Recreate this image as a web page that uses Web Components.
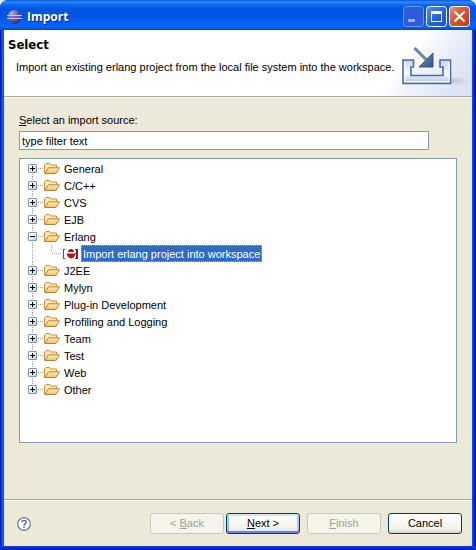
<!DOCTYPE html>
<html lang="en">
<head>
<meta charset="utf-8">
<title>Import</title>
<style>
  html, body { margin: 0; height: 100%; }
  body {
    background: #ece9d8;
    color: #000;
    font: 11px/17px "Liberation Sans", sans-serif;
  }
</style>
</head>
<body>
<dialog-window heading="Import">
  <wizard-banner heading="Select">Import an existing erlang project from the local file system into the workspace.</wizard-banner>
  <wizard-page>
    <filter-field value="type filter text"><u>S</u>elect an import source:</filter-field>
    <tree-view>
      <tree-item place="first">General</tree-item>
      <tree-item>C/C++</tree-item>
      <tree-item>CVS</tree-item>
      <tree-item>EJB</tree-item>
      <tree-item open>Erlang</tree-item>
      <tree-leaf>Import erlang project into workspace</tree-leaf>
      <tree-item>J2EE</tree-item>
      <tree-item>Mylyn</tree-item>
      <tree-item>Plug-in Development</tree-item>
      <tree-item>Profiling and Logging</tree-item>
      <tree-item>Team</tree-item>
      <tree-item>Test</tree-item>
      <tree-item>Web</tree-item>
      <tree-item place="last">Other</tree-item>
    </tree-view>
  </wizard-page>
  <wizard-footer>
    <push-button slot="pair" disabled>&lt; <u>B</u>ack</push-button>
    <push-button slot="pair" primary><u>N</u>ext &gt;</push-button>
    <push-button disabled><u>F</u>inish</push-button>
    <push-button>Cancel</push-button>
  </wizard-footer>
</dialog-window>

<script>
  const define = (name, html, setup) => customElements.define(name, class extends HTMLElement {
    connectedCallback() {
      if (this.shadowRoot) return;
      const template = document.createElement('template');
      template.innerHTML = html;
      this.attachShadow({ mode: 'open' }).append(template.content.cloneNode(true));
      if (setup) setup(this, this.shadowRoot);
    }
  });

  define('dialog-window', `
    <style>
      :host {
        display: flex; flex-direction: column; box-sizing: border-box; min-height: 100vh;
        border-radius: 8px 8px 0 0; overflow: hidden;
        padding: 0 4px 4px;
        background:
          linear-gradient(to bottom, #0c3ce0 0 1px, #0030d0 2px, #001a96 4px) bottom / 100% 4px no-repeat,
          linear-gradient(to right, #0019cf 0 1px, #0831d9 1px 2px, #166aee 2px 3px, #0855dd 3px) left / 4px 100% no-repeat,
          linear-gradient(to left, #00138c 0 1px, #001ea0 1px 2px, #0441d8 2px 3px, #0048f1 3px) right / 4px 100% no-repeat,
          #0054e3;
      }
      header {
        display: flex; align-items: center; gap: 2px; height: 30px; margin: 0 -4px; padding: 3px 6px 0 7px;
        box-sizing: border-box;
        background: linear-gradient(#0a50d8 0, #2b8cff 2px, #0a66ee 5px, #0055e0 9px, #0054e4 17px, #0561fa 23px, #0364fb 27px, #0046d8 30px);
      }
      h1 {
        flex: 1; margin: 0 0 0 2px; color: #fff; font: bold 12px/18px "Open Sans", sans-serif;
        text-shadow: 1px 1px #0a1e78;
      }
      button { padding: 0; border: 0; background: none; width: 21px; height: 21px; }
      svg { display: block; }
      .content { flex: 1; display: flex; flex-direction: column; background: #ece9d8; }
    </style>
    <header>
      <svg width="16" height="16" viewBox="0 0 16 16">
        <defs><radialGradient id="orb" cx=".3" cy=".25" r=".85"><stop offset="0" stop-color="#b4aad6"/><stop offset=".5" stop-color="#6a5ca4"/><stop offset="1" stop-color="#2c2268"/></radialGradient></defs>
        <circle cx="7.5" cy="8" r="7" fill="url(#orb)"/>
        <path d="M0 6.5h15M0 9.5h15" stroke="#c3c6ea"/><path d="M1 8h13" stroke="#6c66ad"/>
      </svg>
      <h1></h1>
      <button aria-label="Minimize" disabled><svg width="21" height="21">
        <rect x=".5" y=".5" width="20" height="20" rx="3" fill="#2a5cdc" stroke="#6f97ee"/>
        <path d="M5 13h7v3H5z" fill="#8fb0f2"/></svg></button>
      <button aria-label="Maximize"><svg width="21" height="21">
        <defs><linearGradient id="blue" x2="1" y2="1"><stop stop-color="#5c8df5"/><stop offset=".5" stop-color="#2a62e4"/><stop offset="1" stop-color="#1a4fd0"/></linearGradient></defs>
        <rect x=".5" y=".5" width="20" height="20" rx="3" fill="url(#blue)" stroke="#fff"/>
        <path d="M5 5h11v11H5zM6 8v7h9V8z" fill="#fff" fill-rule="evenodd"/></svg></button>
      <button aria-label="Close"><svg width="21" height="21">
        <defs><linearGradient id="red" x2="1" y2="1"><stop stop-color="#f09a80"/><stop offset=".4" stop-color="#e25530"/><stop offset="1" stop-color="#c63a10"/></linearGradient></defs>
        <rect x=".5" y=".5" width="20" height="20" rx="3" fill="url(#red)" stroke="#fff"/>
        <path d="M5.500 5.500l10 10M15.500 5.500l-10 10" stroke="#fff" stroke-width="2.200"/></svg></button>
    </header>
    <div class="content"><slot></slot></div>`,
    (host, root) => { root.querySelector('h1').textContent = host.getAttribute('heading'); });

  define('wizard-banner', `
    <style>
      :host {
        display: grid; height: 66px; background: #fff;
        border-bottom: 1px solid #aca899; box-shadow: 0 1px #fff; overflow: hidden;
      }
      .text, svg { grid-area: 1 / 1; }
      .text { padding: 6px 0 0 4px; white-space: nowrap; z-index: 1; }
      h2 { margin: 0; font: bold 13px/18px "DejaVu Sans Condensed", sans-serif; }
      p { margin: 5px 0 0 8px; }
      svg { justify-self: end; }
    </style>
    <svg width="102" height="66" viewBox="370 30 102 66">
      <defs>
        <linearGradient id="sky" x1="0" y1="0" x2="1" y2=".5"><stop offset=".45" stop-color="#fff"/><stop offset="1" stop-color="#d8e0f6"/></linearGradient>
        <linearGradient id="arc" x1="0" y1="0" x2="1" y2=".6"><stop stop-color="#fff"/><stop offset="1" stop-color="#dde4f8"/></linearGradient>
        <linearGradient id="tray" x2="0" y2="1"><stop stop-color="#c6d6ea"/><stop offset=".6" stop-color="#f4f8fd"/><stop offset="1" stop-color="#a9c0e0"/></linearGradient>
        <linearGradient id="arrow" x2="1" y2="1"><stop stop-color="#7d9cc4"/><stop offset="1" stop-color="#2d4f8c"/></linearGradient>
        <radialGradient id="glow"><stop stop-color="#fff8cf"/><stop offset="1" stop-color="#fff8cf" stop-opacity="0"/></radialGradient>
        <radialGradient id="shade"><stop stop-color="#b9b4c4" stop-opacity=".8"/><stop offset="1" stop-color="#c9c4d4" stop-opacity="0"/></radialGradient>
      </defs>
      <path d="M370 30h102v66H370z" fill="url(#sky)"/>
      <path d="M414 96C416 62 440 36 472 30V96z" fill="url(#arc)" opacity=".6"/>
      <ellipse cx="452" cy="81" rx="18" ry="5" fill="url(#shade)"/>
      <circle cx="426" cy="60" r="11" fill="url(#glow)"/>
      <path d="M403 60h10.500v7h-2.500v8.500h32V67h-3v-7h10.500v23.500H403z" fill="url(#tray)" stroke="#4c6ca0" stroke-width="1.600"/>
      <path d="M404.800 62v19.700h44.400V62" fill="none" stroke="#fff" stroke-width="1.200" opacity=".9"/>
      <path d="M414.500 48l13 13" stroke="#6484b4" stroke-width="3"/>
      <path d="M433 53v14h-14z" fill="url(#arrow)" stroke="#35578f"/>
    </svg>
    <div class="text"><h2></h2><p><slot></slot></p></div>`,
    (host, root) => { root.querySelector('h2').textContent = host.getAttribute('heading'); });

  define('wizard-page', `
    <style>
      :host { flex: 1; display: flex; flex-direction: column; gap: 8px; padding: 15px 15px 56px; border-bottom: 1px solid #aca899; box-shadow: 0 1px #fff; }
    </style><slot></slot>`);

  define('filter-field', `
    <style>
      :host { display: block; padding-right: 28px; }
      label { display: block; margin-bottom: 2px; }
      input {
        display: block; box-sizing: border-box; width: 100%; height: 19px; padding: 0 2px; margin: 0;
        border: 1px solid #7f9db9; background: #fff; color: inherit; font: inherit; outline: 0;
      }
    </style>
    <label for="filter"><slot></slot></label><input id="filter" type="text">`,
    (host, root) => { root.querySelector('input').value = host.getAttribute('value'); });

  define('tree-view', `
    <style>
      :host { flex: 1; display: block; border: 1px solid #7f9db9; background: #fff; padding: 1px 8px; }
    </style><slot></slot>`, host => host.setAttribute('role', 'tree'));

  define('tree-item', `
    <style>
      :host { display: flex; align-items: center; height: 17px; line-height: 19px; }
      button { display: block; padding: 0; border: 0; background: none; }
      svg { display: block; flex: none; }
      span { height: 17px; margin-left: 4px; white-space: nowrap; }
      :host([place="first"]) .up, :host([place="last"]) .down, :host([open]) .plus { display: none; }
    </style>
    <button aria-label="Toggle"><svg width="16" height="17" viewBox="0 0 16 17">
      <defs><linearGradient id="box" x2="1" y2="1"><stop offset=".3" stop-color="#fff"/><stop offset="1" stop-color="#c8c2b4"/></linearGradient></defs>
      <g stroke="#aca899" stroke-dasharray="1 1"><path class="up" d="M4.500 0v4"/><path class="down" d="M4.500 14v3"/><path d="M10 8.500h6"/></g>
      <rect x=".5" y="4.500" width="8" height="8" rx=".5" fill="url(#box)" stroke="#7898b5"/>
      <path d="M2 8.500h5" stroke="#000"/><path class="plus" d="M4.500 6v5" stroke="#000"/>
    </svg></button>
    <svg width="16" height="17" viewBox="0 0 16 17">
      <defs><linearGradient id="fold" x2="0" y2="1"><stop stop-color="#fff2c0"/><stop offset="1" stop-color="#f3bf5e"/></linearGradient></defs>
      <path d="M.5 13V5L2 3.500h3.500L7 5h5.500v3" fill="#fbe7b0" stroke="#c99040"/>
      <path d="M.8 13.500L4.500 7.800h11L11.800 13.500z" fill="url(#fold)" stroke="#b98034"/>
    </svg>
    <span><slot></slot></span>`, host => host.setAttribute('role', 'treeitem'));

  define('tree-leaf', `
    <style>
      :host { display: flex; align-items: center; height: 17px; }
      svg { display: block; flex: none; }
      span { box-sizing: border-box; height: 17px; line-height: 17px; margin-left: 3px; padding: 0 1px; white-space: nowrap; background: #316ac5; color: #fff; border: 1px dotted #f0b040; }
    </style>
    <svg width="50" height="17" viewBox="0 0 50 17">
      <g stroke="#aca899" stroke-dasharray="1 1"><path d="M4.500 0v17M23.500 0v8M24 8.500h10"/></g>
      <path d="M35 4h2v1h-1v8h1v1h-2z" fill="#c2262c"/>
      <path d="M47 4h3v10h-3v-1h1V9h-1V8h1V5h-1z" fill="#b01018"/>
      <path d="M40 7C40 3 46 3 46 7zM39 8.500h8V10C46 14.500 41 14.500 39 10z" fill="#b01018"/>
    </svg>
    <span><slot></slot></span>`, host => { host.setAttribute('role', 'treeitem'); host.setAttribute('aria-selected', 'true'); });

  define('wizard-footer', `
    <style>
      :host { display: flex; align-items: center; justify-content: flex-end; gap: 7px; padding: 13px 10px 12px 13px; }
      .help { margin-right: auto; padding: 0; border: 0; background: none; }
      svg { display: block; }
      .pair { display: flex; gap: 2px; }
    </style>
    <button class="help" aria-label="Help"><svg width="14" height="14" viewBox="0 0 14 14">
      <circle cx="7" cy="7" r="6.300" fill="#fff" stroke="#6a7d9c" stroke-width="1.300"/>
      <path d="M4.800 5.300C4.800 2.800 9.300 2.900 9.200 5.300 9.100 6.800 7 6.900 7 8.800M7 9.800v1.500" fill="none" stroke="#5a6e94" stroke-width="1.600"/>
    </svg></button>
    <div class="pair"><slot name="pair"></slot></div><slot></slot>`);

  define('push-button', `
    <style>
      :host { display: block; }
      button {
        display: block; box-sizing: border-box; width: 74px; height: 21px; padding: 0;
        border: 1px solid #003c74; border-radius: 3px; color: #000; font: inherit; line-height: 19px;
        background: linear-gradient(#fff, #f4f3ee 70%, #ecebe5 85%, #d6d0c5);
      }
      :host([primary]) button { box-shadow: inset 0 2px #cee7ff, inset 0 -2px #6982ee, inset 2px 0 #a9c3f3, inset -2px 0 #a9c3f3; }
      button:disabled { background: #f5f4ea; border-color: #c9c7ba; color: #a1a192; }
    </style><button type="button"><slot></slot></button>`,
    (host, root) => { root.querySelector('button').disabled = host.hasAttribute('disabled'); });
</script>
</body>
</html>
